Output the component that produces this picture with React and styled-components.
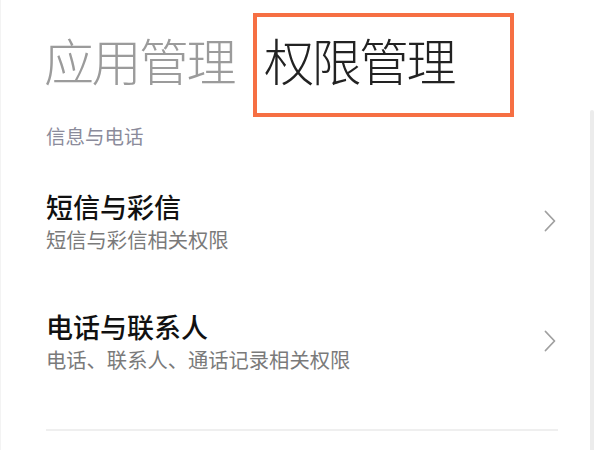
import React from "react";
import styled, { createGlobalStyle } from "styled-components";

const GlobalStyle = createGlobalStyle`
    html, body {
        margin: 0;
        padding: 0;
        background: #ffffff;
    }

    body {
        font-family: "Noto Sans CJK SC", "Noto Sans", sans-serif;
    }
`;

const Screen = styled.div`
    position: relative;
    width: 600px;
    height: 450px;
    overflow: hidden;
    background: #ffffff;
    border-left: 1px solid #f3f3f3;
    box-sizing: border-box;
`;

const Tabs = styled.div`
    display: flex;
    align-items: flex-start;
    padding: 13px 0 0 43px;
`;

const Tab = styled.div`
    box-sizing: border-box;
    height: 104px;
    padding: ${props => (props.highlighted ? "13px 56px 0 7px" : "17px 0 0 0")};
    margin-left: ${props => (props.highlighted ? "19px" : "0")};
    border: ${props => (props.highlighted ? "4px solid #f66f43" : "none")};
    font-size: 50px;
    line-height: 58px;
    font-weight: 300;
    letter-spacing: -2.5px;
    color: ${props => (props.active ? "#222222" : "#9b9b9b")};
    white-space: nowrap;
`;

const Section = styled.div`
    padding: 5px 0 0 45px;
`;

const SectionTitle = styled.div`
    font-size: 19.5px;
    line-height: 28px;
    color: #8b8b9b;
`;

const Row = styled.div`
    display: flex;
    align-items: center;
    justify-content: space-between;
    padding: 28px 44px 28px 0;
    margin-top: ${props => props.first ? "11px" : "0"};
`;

const RowText = styled.div`
    display: flex;
    flex-direction: column;
`;

const RowTitle = styled.div`
    font-size: 27px;
    line-height: 36px;
    font-weight: 500;
    color: #111111;
`;

const RowSub = styled.div`
    font-size: 20.3px;
    line-height: 28px;
    color: #7a7a7a;
`;

const Divider = styled.div`
    height: 2px;
    margin: 28px 42px 0 0;
    background: #efefef;
`;

const ScrollThumb = styled.div`
    position: absolute;
    top: 110px;
    right: 6px;
    width: 4px;
    height: 360px;
    border-radius: 2px;
    background: #ececec;
`;

const Chevron = () => (
    <svg width="12" height="22" viewBox="0 0 12 22">
        <polyline
            points="1.5,1.5 10.5,11 1.5,20.5"
            fill="none"
            stroke="#a0a0a0"
            strokeWidth="1.8"
            strokeLinecap="round"
            strokeLinejoin="round"
        />
    </svg>
);

const items = [
    { title: "短信与彩信", sub: "短信与彩信相关权限" },
    { title: "电话与联系人", sub: "电话、联系人、通话记录相关权限" }
];

const App = () => (
    <Screen>
        <GlobalStyle />
        <Tabs>
            <Tab>{"应用管理"}</Tab>
            <Tab active highlighted>{"权限管理"}</Tab>
        </Tabs>

        <Section>
            <SectionTitle>{"信息与电话"}</SectionTitle>
            {items.map((item, i) => (
                <Row key={item.title} first={i === 0}>
                    <RowText>
                        <RowTitle>{item.title}</RowTitle>
                        <RowSub>{item.sub}</RowSub>
                    </RowText>
                    <Chevron />
                </Row>
            ))}
            <Divider />
        </Section>

        <ScrollThumb />
    </Screen>
);

export default App;
